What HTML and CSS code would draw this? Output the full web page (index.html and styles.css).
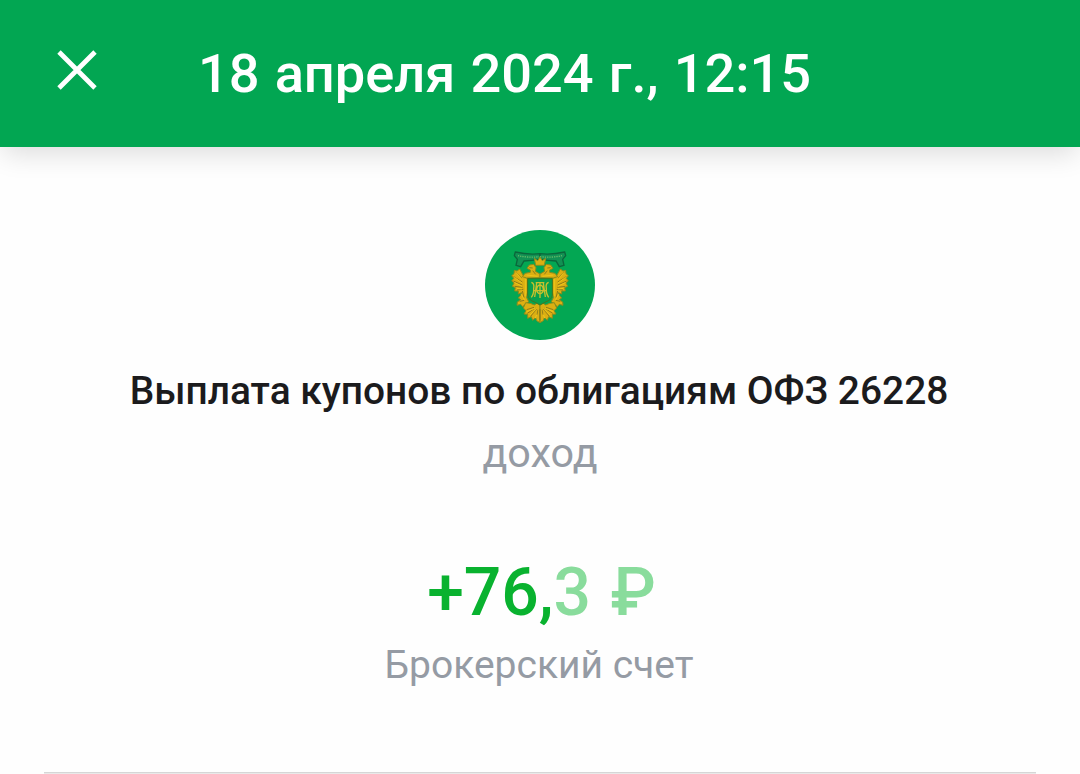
FILE: index.html
```html
<!DOCTYPE html>
<html lang="ru">
<head>
  <meta charset="UTF-8" />
  <title>Операция</title>
  <link rel="stylesheet" href="styles.css">
</head>
<body>
  <header class="topbar">
    <svg class="close" viewBox="0 0 40 40"><path d="M2 2L38 38M38 2L2 38" /></svg>
    <h1>18 апреля 2024 г., 12:15</h1>
  </header>
  <main>
    <svg class="logo" viewBox="15 15 330 330">
      <defs>
        <!-- left half of the eagle, mirrored below -->
        <g id="half">
          <path class="ribbon" d="M180 86Q145 90 106 81L103 92L112 103L108 121L122 125L132 108Q155 106 180 103Z" />
          <path class="ribbon-line" d="M180 95Q145 99 114 92" />
          <path class="gold" d="M119 132L111 138L103 136L102 146L95 152L101 160L95 168L102 174L97 184L106 188L104 198L115 198L115 207L125 203L121 212L115 219L122 224L112 231L111 241L122 238L128 245L136 238L146 230L140 218L143 200L144 162L130 152Z" />
          <path class="gold" d="M141 130L148 120L161 118L168 128L166 139L180 147L180 158L140 159L127 155L135 145L151 142L151 135Z" />
          <path class="gold" d="M137 233L151 235L163 240L180 228L180 293L170 287L167 278L158 286L154 275L143 280L143 268L132 267L138 257L130 249Z" />
          <path class="shade" d="M107 142L126 160M101 155L127 171M100 168L127 180M104 184L128 187M111 195L130 193M127 198L132 218M119 229L133 226M148 128L158 129M158 137L167 148M140 254L162 247M142 265L166 249M152 274L170 252" />
          <path class="light" d="M108 143L126 164M103 157L126 174M104 173L126 184M111 190L126 192M124 208L134 226M136 162L136 214M140 150L173 154M140 260L166 249M150 270L169 252M166 279L176 253" />
        </g>
      </defs>
      <circle cx="180" cy="180" r="165" fill="#03a753" />
      <use href="#half" />
      <use href="#half" transform="translate(360 0) scale(-1 1)" />
      <path class="gold" d="M167 121L163 100L173 107L180 96L187 107L197 100L193 121Z" />
      <path class="shield" d="M143 161H217V211Q214 225 197 231L180 240L163 231Q146 225 143 211Z" />
      <path class="monogram" d="M154 172Q164 175 161 190Q162 207 154 217M206 172Q196 175 199 190Q198 207 206 217M161 197H199M180 171V219M167 173H193M180 180Q171 181 170 193Q170 204 180 207Q190 204 190 193Q189 181 180 180M170 174L164 216M190 174L196 216" />
      <path class="shade" d="M180 252V286M174 254L171 269M186 254L189 269" />
    </svg>
    <h2>Выплата купонов по облигациям ОФЗ 26228</h2>
    <p class="type">доход</p>
    <p class="amount">+76,<span>3 ₽</span></p>
    <p class="account">Брокерский счет</p>
  </main>
</body>
</html>
```

FILE: styles.css
```css
body {
  margin: 0;
  height: 774px;
  overflow: hidden;
  background: #fefefe;
  font-family: Roboto, sans-serif;
}

.topbar {
  display: flex;
  align-items: center;
  height: 147px;
  box-sizing: border-box;
  padding: 0 57px;
  background: #02a652;
  box-shadow: 0 9px 26px -3px rgba(0, 0, 0, 0.14);
}

.close {
  width: 40px;
  height: 40px;
  margin-bottom: 7px;
  stroke: #fff;
  stroke-width: 4.8;
}

h1 {
  margin: 0 0 0 101px;
  color: #fff;
  font-size: 54.2px;
  font-weight: 500;
  word-spacing: 1.6px;
}

main {
  height: 626px;
  margin: 0 44px;
  padding-top: 83px;
  text-align: center;
  box-sizing: border-box;
  border-bottom: 1px solid #d6d6d6;
  box-shadow: 0 1px #e9e9e9;
}

.logo {
  display: block;
  width: 110px;
  height: 110px;
  margin: 0 auto;
  fill: none;
}

.gold {
  fill: #dcaf12;
  stroke: #8a8c1c;
  stroke-width: 3;
}

.shade {
  stroke: #80701b;
  stroke-width: 2.5;
}

.light {
  stroke: #edc51b;
  stroke-width: 3;
}

.ribbon {
  fill: #129153;
  stroke: #0b663b;
  stroke-width: 4;
}

.ribbon-line {
  stroke: #65b967;
  stroke-width: 4;
  stroke-dasharray: 4 3;
}

.shield {
  fill: #08a04c;
  stroke: #45751f;
  stroke-width: 3;
}

.monogram {
  stroke: #c8c02c;
  stroke-width: 4;
}

h2 {
  margin: 27px 2px 0 0;
  color: #1b1b1d;
  font-size: 38.9px;
  line-height: 48px;
  font-weight: 500;
}

p {
  margin: 0;
}

.type {
  margin-top: 14px;
  font-size: 41.3px;
  line-height: 48px;
  color: #959ba4;
}

.amount {
  margin: 76px 0 0 3px;
  font-size: 66px;
  line-height: 80px;
  font-weight: 500;
  word-spacing: 3px;
  color: #09b22f;
}

.amount span {
  color: #89dc9c;
}

.account {
  margin: 8px 2px 0 0;
  font-size: 39px;
  line-height: 48px;
  color: #959ba4;
}
```
